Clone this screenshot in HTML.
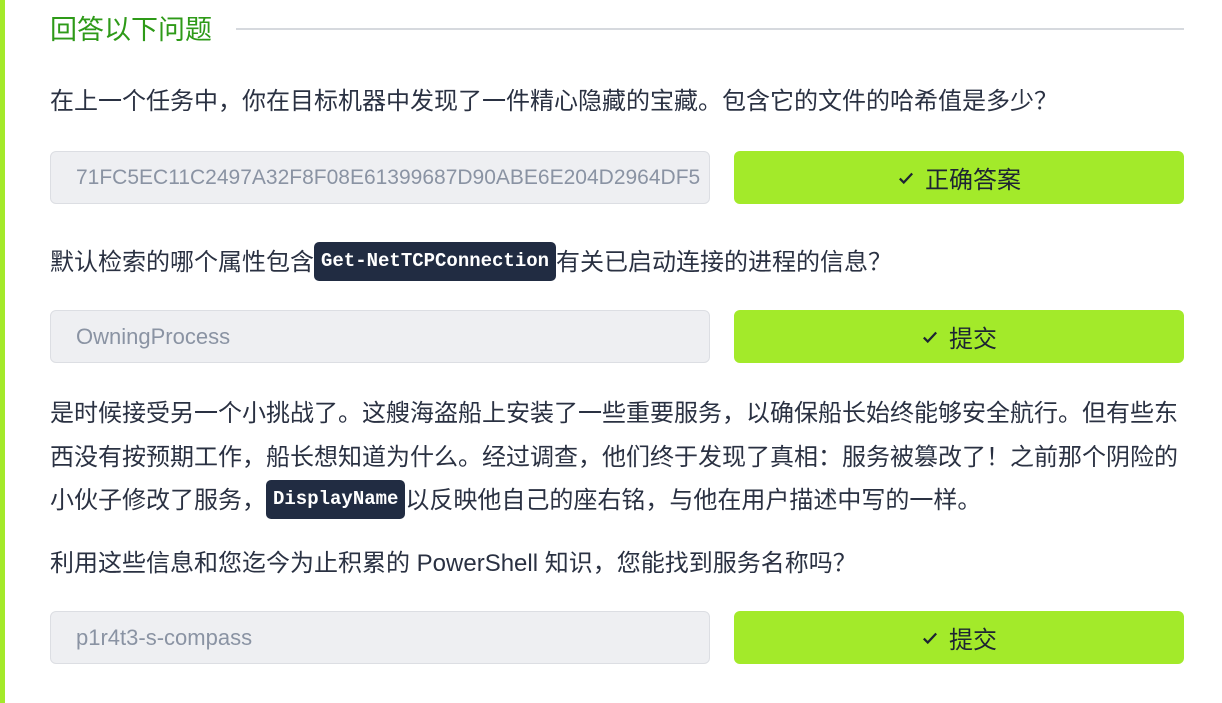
<!DOCTYPE html>
<html><head><meta charset="utf-8"><style>
*{margin:0;padding:0;box-sizing:border-box}
body{width:1222px;height:703px;background:#fff;position:relative;overflow:hidden;font-family:"Liberation Sans","Noto Sans CJK SC",sans-serif;color:#2a3142}
.bar{position:absolute;left:0;top:0;width:5px;height:703px;background:#a3ea2a}
.title{position:absolute;left:50px;top:12px;font-size:27px;color:#2e9a18;line-height:36px}
.rule{position:absolute;left:236px;top:28px;width:948px;height:2px;background:#d6d9de}
.t{position:absolute;left:50px;font-size:24px;line-height:36px;white-space:nowrap}
.inp{position:absolute;left:50px;width:660px;height:53px;background:#eeeff2;border:1px solid #dcdee3;border-radius:6px;font-size:22px;color:#8a93a3;padding-left:25px;line-height:51px;white-space:nowrap;overflow:hidden}
.btn{position:absolute;left:734px;width:450px;height:53px;background:#a3ea2a;border-radius:6px;font-size:24px;color:#1d2433;display:flex;align-items:center;justify-content:center;gap:10px}
.btn svg{width:18px;height:18px}
code{display:inline-block;background:#212c42;color:#fff;font-family:"Liberation Mono",monospace;font-weight:bold;font-size:19px;border-radius:5px;padding:0 7px;line-height:39px;vertical-align:middle;position:relative;top:-2px}
</style></head><body>
<div class="bar"></div>
<div class="title">回答以下问题</div>
<div class="rule"></div>

<div class="t" style="top:84px">在上一个任务中，你在目标机器中发现了一件精心隐藏的宝藏。包含它的文件的哈希值是多少？</div>
<div class="inp" style="top:151px;font-size:21px">71FC5EC11C2497A32F8F08E61399687D90ABE6E204D2964DF5</div>
<div class="btn" style="top:151px"><svg viewBox="0 0 16 16"><path d="M2.5 8.5l3.5 3.5 7.5-8" fill="none" stroke="#1d2433" stroke-width="2"/></svg>正确答案</div>

<div class="t" style="top:244px">默认检索的哪个属性包含<code>Get-NetTCPConnection</code>有关已启动连接的进程的信息？</div>
<div class="inp" style="top:310px">OwningProcess</div>
<div class="btn" style="top:310px"><svg viewBox="0 0 16 16"><path d="M2.5 8.5l3.5 3.5 7.5-8" fill="none" stroke="#1d2433" stroke-width="2"/></svg>提交</div>

<div class="t" style="top:396px">是时候接受另一个小挑战了。这艘海盗船上安装了一些重要服务，以确保船长始终能够安全航行。但有些东</div>
<div class="t" style="top:440px">西没有按预期工作，船长想知道为什么。经过调查，他们终于发现了真相：服务被篡改了！之前那个阴险的</div>
<div class="t" style="top:482px">小伙子修改了服务，<code>DisplayName</code>以反映他自己的座右铭，与他在用户描述中写的一样。</div>

<div class="t" style="top:546px">利用这些信息和您迄今为止积累的 PowerShell 知识，您能找到服务名称吗？</div>
<div class="inp" style="top:611px">p1r4t3-s-compass</div>
<div class="btn" style="top:611px"><svg viewBox="0 0 16 16"><path d="M2.5 8.5l3.5 3.5 7.5-8" fill="none" stroke="#1d2433" stroke-width="2"/></svg>提交</div>
</body></html>
